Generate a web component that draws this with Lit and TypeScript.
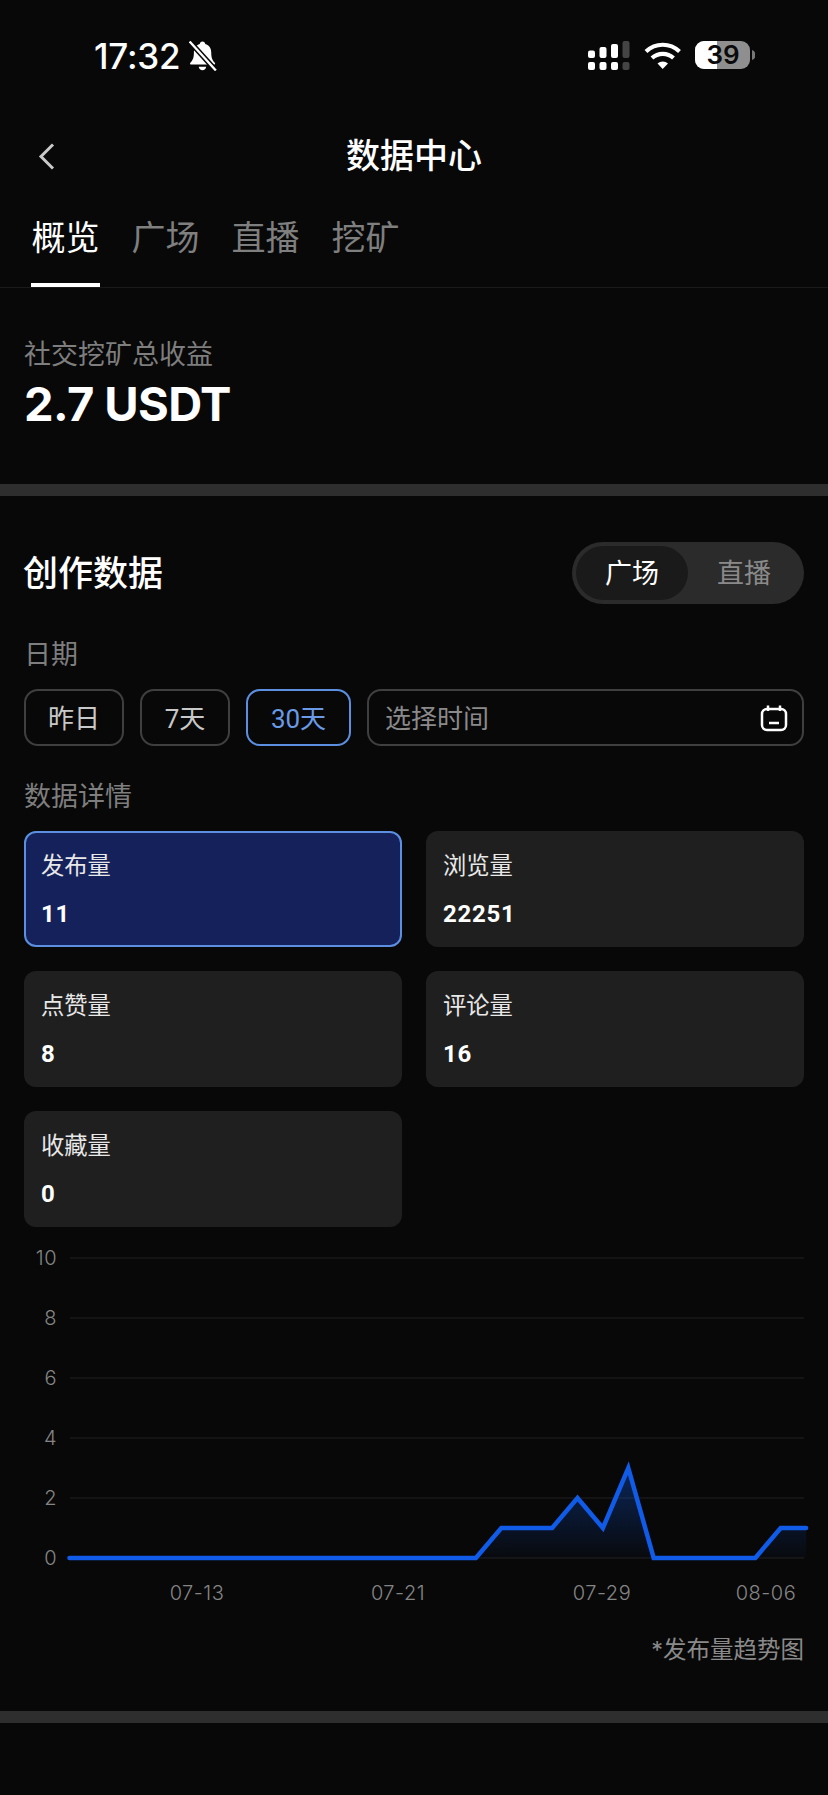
import { LitElement, html, css, svg } from "lit";
import { customElement } from "lit/decorators.js";

const DATA = [0,0,0,0,0,0,0,0,0,0,0,0,0,0,0,0,0,1,1,1,2,1,3,0,0,0,0,0,1,1];
const X0 = 69.5;
const STEP = 25.4;
const Y0 = 1558;
const UNIT = 30;
const px = (i: number) => X0 + i * STEP;
const py = (v: number) => Y0 - v * UNIT;

@customElement("app-root")
export class AppRoot extends LitElement {
  static styles = css`
    :host {
      display: block;
      width: 828px;
      height: 1795px;
      overflow: hidden;
      background: #080809;
      color: #fff;
      font-family: Inter, "Noto Sans CJK SC", sans-serif;
    }
    .status { height: 112px; display: flex; align-items: flex-start; padding: 38px 0 0 94px; box-sizing: border-box; }
    .time { font-size: 35px; line-height: 36px; font-weight: 500; letter-spacing: -0.2px; }
    .bell { margin: 3px 0 0 9px; }
    .sig { margin: 2px 73px 0 auto; }
    .nav { height: 88px; display: flex; align-items: center; justify-content: center; position: relative; }
    .nav h1 { margin: 0; font-size: 34px; font-weight: 500; line-height: 44px; }
    .back { position: absolute; left: 36px; top: 30px; }
    .tabs { height: 88px; box-sizing: border-box; padding: 0 0 0 31px; display: flex; gap: 31px; border-bottom: 1px solid #1a1a1a; }
    .tab { width: 69px; text-align: center; font-size: 34px; line-height: 44px; padding-top: 16px; height: 87px; box-sizing: border-box; color: #7f7f7f; }
    .tab.on { color: #fff; border-bottom: 4px solid #fff; }
    .sum { height: 196px; box-sizing: border-box; padding: 49px 24px 0; }
    .muted { font-size: 27px; line-height: 36px; color: #7e7e7e; }
    .big { font-size: 47px; line-height: 58px; font-weight: 700; margin-top: 2px; letter-spacing: -0.6px; }
    .band { height: 12px; background: #2e2e2e; }
    .pad { padding: 0 24px; }
    .head { display: flex; justify-content: space-between; align-items: center; padding-top: 46px; }
    .head h2 { margin: 0 0 0 -1px; font-size: 35px; line-height: 44px; font-weight: 500; }
    .toggle { width: 232px; height: 62px; border-radius: 31px; background: #2b2b2b; display: flex; align-items: center; padding: 0 4px; box-sizing: border-box; }
    .toggle span { flex: 1; text-align: center; font-size: 27px; line-height: 54px; height: 54px; color: #8a8a8a; padding-top: 1px; box-sizing: border-box; }
    .toggle span.on { flex: 0 0 112px; border-radius: 27px; background: #1a1a1a; color: #fff; }
    .lab { margin-top: 33px; }
    .lab.second { padding-top: 1px; margin-top: 32px; }
    .dates { display: flex; gap: 16px; margin-top: 16px; height: 57px; }
    .d { box-sizing: border-box; height: 57px; border: 2px solid #3f3f3f; border-radius: 14px; display: flex; align-items: center; justify-content: center; font-size: 26px; color: #c8c8c8; font-family: Roboto, "Noto Sans CJK SC", sans-serif; }
    .d span { margin-top: -3px; }
    .d.on { border-color: #5c8fe0; color: #6a9ae6; }
    .pick { flex: 1; justify-content: space-between; padding: 0 14px 0 16px; color: #8a8a8a; }
    .cards { display: grid; grid-template-columns: 378px 378px; gap: 24px; margin-top: 16px; }
    .card { height: 116px; box-sizing: border-box; border-radius: 12px; background: #1f1f1f; padding: 20px 17px 0; }
    .card.on { background: #15215a; border: 2px solid #5c8fe0; padding: 18px 15px 0; }
    .card .t { font-size: 23.3px; line-height: 30px; color: #e8e8e8; }
    .card .v { font-size: 24px; line-height: 30px; font-weight: 700; margin-top: 18px; font-family: Roboto, sans-serif; letter-spacing: 0.7px; }
    .chart { display: block; }
    .grid { stroke: #191919; stroke-width: 1.5; }
    .ax { font-size: 20px; fill: #858585; font-weight: 300; letter-spacing: 0.5px; }
    .ln { fill: none; stroke: #105ce8; stroke-width: 4.5; stroke-linejoin: miter; stroke-linecap: round; }
    .note { text-align: right; font-size: 23.5px; line-height: 36px; color: #8a8a8a; padding: 12px 24px 0; height: 91px; box-sizing: border-box; }
  `;

  private chart() {
    const pts = DATA.map((v, i) => `${px(i)},${py(v)}`).join(" ");
    const area = `${px(0)},${Y0} ${pts} ${px(DATA.length - 1)},${Y0}`;
    const ys = [10, 8, 6, 4, 2, 0];
    const xs: [string, number][] = [["07-13", 197], ["07-21", 398], ["07-29", 602], ["08-06", 766]];
    return html`<svg class="chart" width="828" height="393" viewBox="0 1227 828 393">
      <defs>
        <linearGradient id="g" x1="0" y1="1468" x2="0" y2="1558" gradientUnits="userSpaceOnUse">
          <stop offset="0" stop-color="#105ce8" stop-opacity=".36"></stop>
          <stop offset="1" stop-color="#105ce8" stop-opacity=".02"></stop>
        </linearGradient>
      </defs>
      ${ys.map((v) => svg`
        <line class="grid" x1="70" x2="804" y1=${py(v)} y2=${py(v)}></line>
        <text class="ax" x="57" y=${py(v) + 7} text-anchor="end">${v}</text>`)}
      ${xs.map(([t, x]) => svg`<text class="ax" x=${x} y="1600" text-anchor="middle">${t}</text>`)}
      <polygon points=${area} fill="url(#g)"></polygon>
      <polyline class="ln" points=${pts}></polyline>
    </svg>`;
  }

  private card(t: string, v: string, on = false) {
    return html`<div class="card ${on ? "on" : ""}"><div class="t">${t}</div><div class="v">${v}</div></div>`;
  }

  render() {
    return html`
      <div class="status">
        <span class="time">17:32</span>
        <svg class="bell" width="28" height="30" viewBox="1 1 26 28">
          <path d="M13.5 1.5c1.6 0 2.4 1 2.6 2.2 3.6 1 5.6 4 5.6 8 0 4.6.8 7 3.3 9.6.7.8.2 1.7-.8 1.7H3c-1 0-1.5-.9-.8-1.7 2.5-2.6 3.3-5 3.300-9.6 0-4 2-7 5.500-8 .2-1.200 1-2.200 2.500-2.200Z" fill="#fff"></path>
          <path d="M10 25h7c-.3 2-1.700 3.300-3.500 3.300S10.300 27 10 25Z" fill="#fff"></path>
          <path d="M1.500 1.500 26 28.500" stroke="#080809" stroke-width="5"></path>
          <path d="M1.500 1.500 26 28.500" stroke="#fff" stroke-width="2.200"></path>
        </svg>
        <svg class="sig" width="167" height="30" viewBox="588 40 167 30">
          <g fill="#fff">
            <rect x="588" y="50.500" width="7" height="7.500" rx="2"></rect>
            <rect x="599.500" y="47" width="7" height="11" rx="2"></rect>
            <rect x="611" y="44" width="7" height="14" rx="2"></rect>
            <rect x="588" y="62" width="7" height="8" rx="2"></rect>
            <rect x="599.500" y="62" width="7" height="8" rx="2"></rect>
            <rect x="611" y="62" width="7" height="8" rx="2"></rect>
          </g>
          <g fill="#444">
            <rect x="622.500" y="41" width="7" height="17" rx="2"></rect>
            <rect x="622.500" y="62" width="7" height="8" rx="2"></rect>
          </g>
          <g fill="none" stroke="#fff" stroke-width="4.200" stroke-linecap="butt">
            <path d="M646 51.500c9.500-9 24-9 33.500 0"></path>
            <path d="M652 58c6-5.500 15.500-5.500 21.500 0"></path>
          </g>
          <path d="M657.500 63.500c3-2.700 7.500-2.700 10.500 0L662.700 69Z" fill="#fff"></path>
          <clipPath id="bl"><rect x="695" y="41" width="22" height="28"></rect></clipPath>
          <rect x="695" y="41" width="55" height="28" rx="9" fill="#8f8f8f"></rect>
          <rect x="695" y="41" width="55" height="28" rx="9" fill="#fff" clip-path="url(#bl)"></rect>
          <path d="M752 50c2.500.7 3.500 2.800 3.500 5s-1 4.300-3.500 5Z" fill="#777"></path>
          <text x="723" y="64" text-anchor="middle" font-size="26" font-weight="600" fill="#0a0a0a">39</text>
        </svg>
      </div>
      <div class="nav">
        <svg class="back" width="22" height="30" viewBox="0 0 22 30"><path d="M17 2.500 5 14.500l12 12" fill="none" stroke="#c9c9c9" stroke-width="3"></path></svg>
        <h1>数据中心</h1>
      </div>
      <div class="tabs">
        <div class="tab on">概览</div><div class="tab">广场</div><div class="tab">直播</div><div class="tab">挖矿</div>
      </div>
      <div class="sum">
        <div class="muted">社交挖矿总收益</div>
        <div class="big">2.7 USDT</div>
      </div>
      <div class="band"></div>
      <div class="pad">
        <div class="head">
          <h2>创作数据</h2>
          <div class="toggle"><span class="on">广场</span><span>直播</span></div>
        </div>
        <div class="muted lab">日期</div>
        <div class="dates">
          <div class="d" style="width:100px"><span>昨日</span></div>
          <div class="d" style="width:90px"><span>7天</span></div>
          <div class="d on" style="width:105px"><span>30天</span></div>
          <div class="d pick">
            <span>选择时间</span>
            <svg width="28" height="28" viewBox="0 0 28 28" fill="none" stroke="#fff" stroke-width="2.500">
              <rect x="2" y="5" width="24" height="21" rx="5"></rect>
              <path d="M8 1.500V7M20 1.500V7M9 19h10"></path>
            </svg>
          </div>
        </div>
        <div class="muted lab second">数据详情</div>
        <div class="cards">
          ${this.card("发布量", "11", true)}
          ${this.card("浏览量", "22251")}
          ${this.card("点赞量", "8")}
          ${this.card("评论量", "16")}
          ${this.card("收藏量", "0")}
        </div>
      </div>
      ${this.chart()}
      <div class="note">*发布量趋势图</div>
      <div class="band"></div>
    `;
  }
}
